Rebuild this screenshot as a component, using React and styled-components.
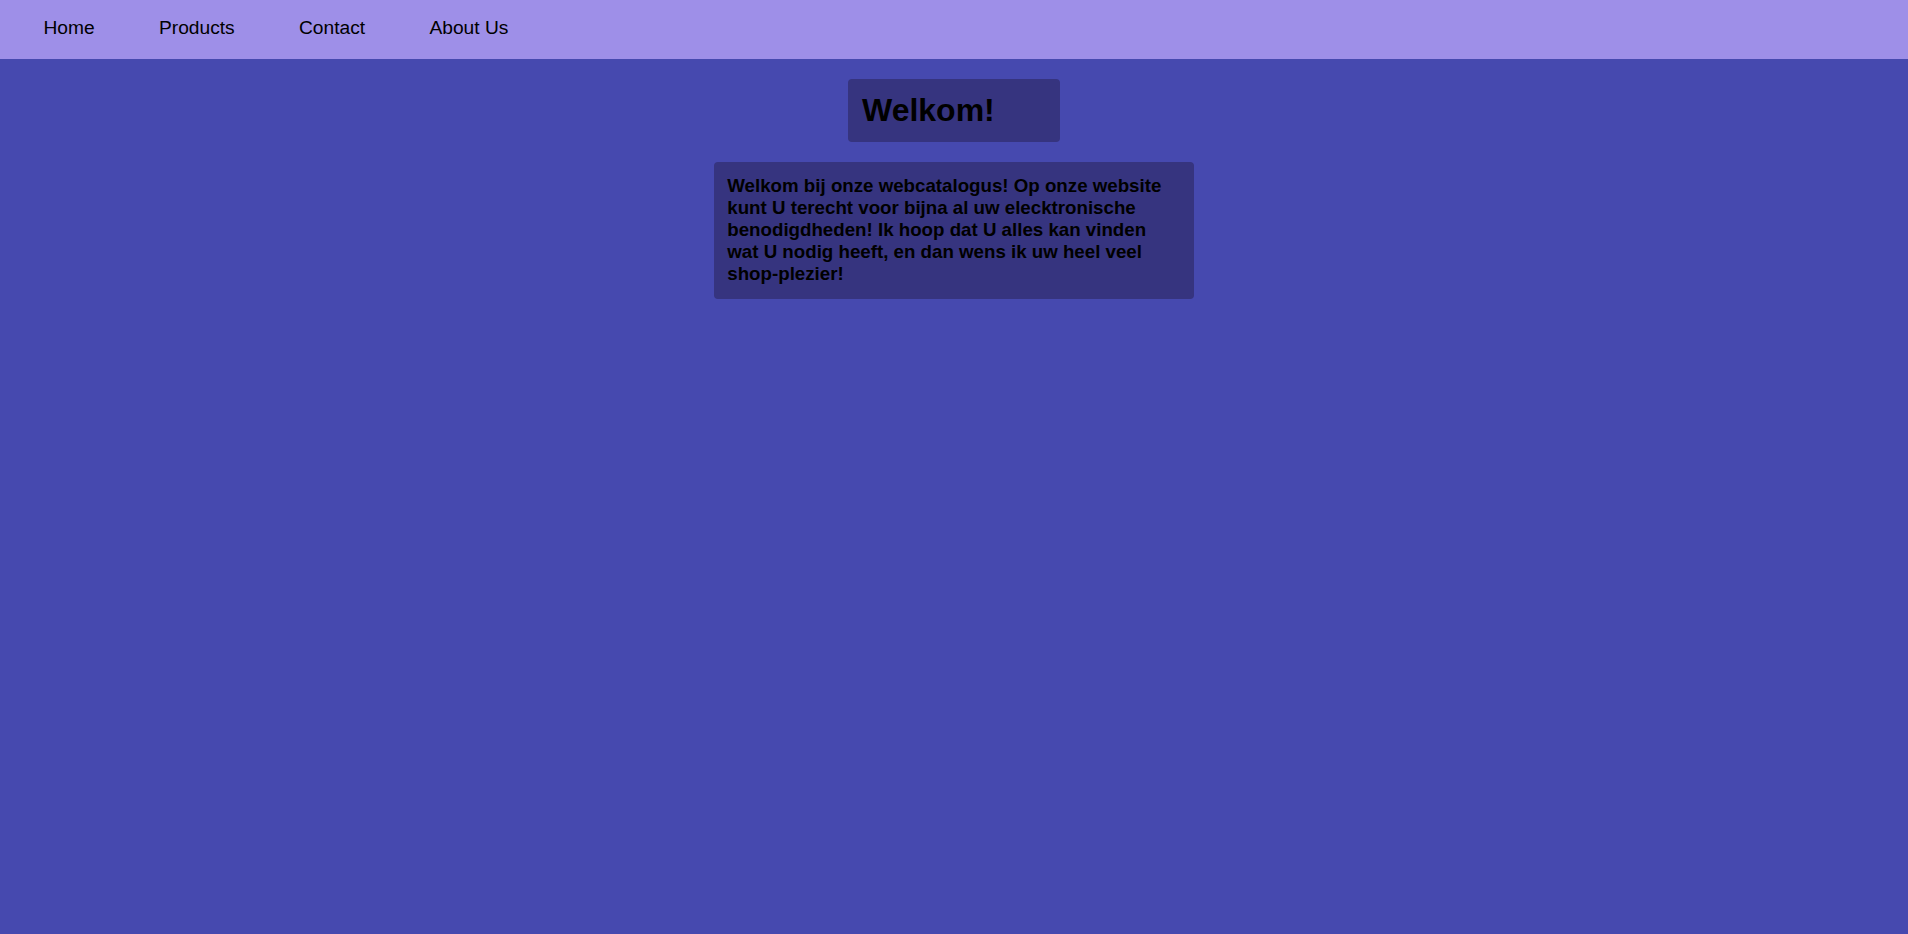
import React from "react";
import styled, { createGlobalStyle } from "styled-components";

const GlobalStyle = createGlobalStyle`
  html, body {
    margin: 0;
    padding: 0;
    background: #4649af;
    font-family: "Liberation Sans", Arial, sans-serif;
    color: #000;
  }
`;

const NavBar = styled.nav`
  height: 59px;
  box-sizing: border-box;
  background: #9e8fe8;
  display: flex;
  align-items: flex-start;
  gap: 64.3px;
  padding: 17px 0 0 43.5px;
`;

const NavLink = styled.a`
  font-size: 19.2px;
  line-height: normal;
  color: #000;
  text-decoration: none;
  cursor: pointer;
`;

const Main = styled.main`
  display: flex;
  flex-direction: column;
  align-items: center;
  gap: 20px;
  padding-top: 20px;
`;

const Panel = styled.div`
  box-sizing: border-box;
  width: ${(p) => p.$width}px;
  padding: ${(p) => p.$pad};
  background: #36347f;
  border-radius: 4px;
`;

const Title = styled.h1`
  margin: 0;
  font-size: 32px;
  font-weight: bold;
  line-height: normal;
`;

const Intro = styled.h3`
  margin: 0;
  font-size: 18.72px;
  font-weight: bold;
  line-height: normal;
`;

export default function App() {
  const links = ["Home", "Products", "Contact", "About Us"];
  return (
    <>
      <GlobalStyle />
      <NavBar>
        {links.map((l) => (
          <NavLink key={l}>{l}</NavLink>
        ))}
      </NavBar>
      <Main>
        <Panel $width={212} $pad="12.9px 14px">
          <Title>Welkom!</Title>
        </Panel>
        <Panel $width={480} $pad="13.7px 13.3px">
          <Intro>
            Welkom bij onze webcatalogus! Op onze website kunt U terecht voor
            bijna al uw elecktronische benodigdheden! Ik hoop dat U alles kan
            vinden wat U nodig heeft, en dan wens ik uw heel veel shop-plezier!
          </Intro>
        </Panel>
      </Main>
    </>
  );
}
